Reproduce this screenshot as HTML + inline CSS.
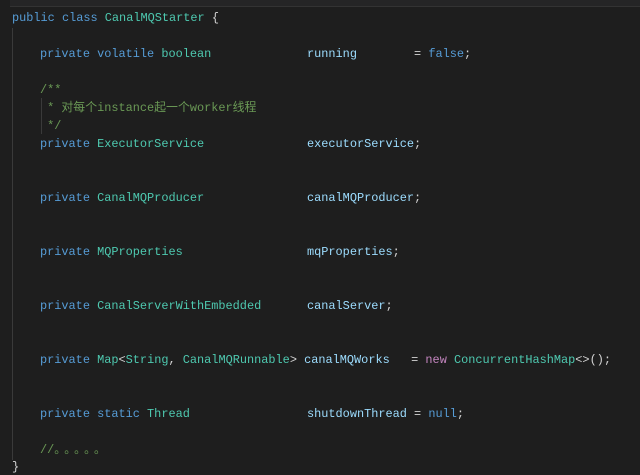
<!DOCTYPE html><html><head><style>
body{margin:0;width:640px;height:475px;background:#1e1e1e;overflow:hidden;position:relative;font-family:"Liberation Mono","Noto Sans CJK SC",monospace;font-size:11.9px;color:#d4d4d4}
.l{position:absolute;white-space:pre;line-height:14px}
.k{color:#569cd6}.t{color:#4ec9b0}.v{color:#9cdcfe}.c{color:#6a9955}.n{color:#c586c0}
.top{position:absolute;left:10px;top:0;width:630px;height:6px;background:#252526;border-bottom:1px solid #333}
.g{position:absolute;left:12px;top:28px;width:1px;height:432px;background:#3a3a3a}
.g2{position:absolute;left:41px;top:98px;width:1px;height:36px;background:#3a3a3a}
</style></head><body>
<div class="top"></div><div class="g"></div><div class="g2"></div>
<div class="l" style="left:12px;top:11px"><span class="k">public class</span> <span class="t">CanalMQStarter</span> {</div>
<div class="l" style="left:40px;top:47px"><span class="k">private volatile</span> <span class="t">boolean</span></div>
<div class="l" style="left:307px;top:47px"><span class="v">running</span>        = <span class="k">false</span>;</div>
<div class="l c" style="left:40px;top:83px">/**</div>
<div class="l c" style="left:40px;top:101px"> * 对每个instance起一个worker线程</div>
<div class="l c" style="left:40px;top:119px"> */</div>
<div class="l" style="left:40px;top:137px"><span class="k">private</span> <span class="t">ExecutorService</span></div>
<div class="l" style="left:307px;top:137px"><span class="v">executorService</span>;</div>
<div class="l" style="left:40px;top:191px"><span class="k">private</span> <span class="t">CanalMQProducer</span></div>
<div class="l" style="left:307px;top:191px"><span class="v">canalMQProducer</span>;</div>
<div class="l" style="left:40px;top:245px"><span class="k">private</span> <span class="t">MQProperties</span></div>
<div class="l" style="left:307px;top:245px"><span class="v">mqProperties</span>;</div>
<div class="l" style="left:40px;top:299px"><span class="k">private</span> <span class="t">CanalServerWithEmbedded</span></div>
<div class="l" style="left:307px;top:299px"><span class="v">canalServer</span>;</div>
<div class="l" style="left:40px;top:353px"><span class="k">private</span> <span class="t">Map</span>&lt;<span class="t">String</span>, <span class="t">CanalMQRunnable</span>&gt; <span class="v">canalMQWorks</span>   = <span class="n">new</span> <span class="t">ConcurrentHashMap</span>&lt;&gt;();</div>
<div class="l" style="left:40px;top:407px"><span class="k">private static</span> <span class="t">Thread</span></div>
<div class="l" style="left:307px;top:407px"><span class="v">shutdownThread</span> = <span class="k">null</span>;</div>
<div class="l c" style="left:40px;top:443px">//<span style="letter-spacing:4px">。。。。。</span></div>
<div class="l" style="left:12px;top:460px">}</div>
</body></html>
